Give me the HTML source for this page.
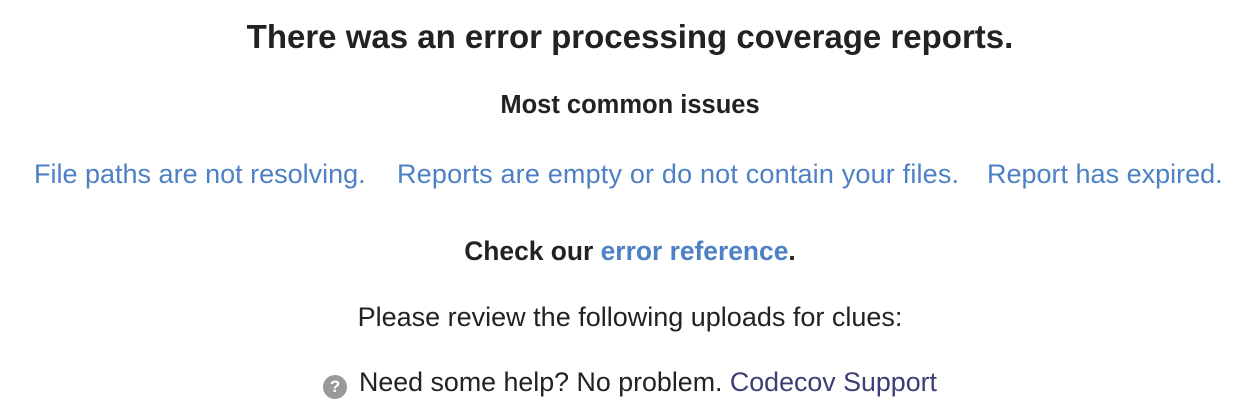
<!DOCTYPE html>
<html><head><meta charset="utf-8"><style>
body{margin:0;width:1260px;height:420px;background:#fff;font-family:"Liberation Sans",sans-serif;color:#222;position:relative;overflow:hidden}
.c{position:absolute;left:0;width:1260px;text-align:center;white-space:nowrap}
a{color:#4d80c4;text-decoration:none}
.l{position:absolute;top:159px;font-size:27px;color:#4d80c4;white-space:nowrap}
</style></head><body>
<div class="c" style="top:18px;font-size:33px;font-weight:bold">There was an error processing coverage reports.</div>
<div class="c" style="top:91px;font-size:25.5px;font-weight:bold">Most common issues</div>
<span class="l" style="left:34px">File paths are not resolving.</span>
<span class="l" style="left:397px;letter-spacing:0.18px">Reports are empty or do not contain your files.</span>
<span class="l" style="left:987px">Report has expired.</span>
<div class="c" style="top:236px;font-size:26.4px;font-weight:bold">Check our <a href="#">error reference</a>.</div>
<div class="c" style="top:302px;font-size:27px">Please review the following uploads for clues:</div>
<div class="c" style="top:367px;font-size:26.8px"><span style="display:inline-block;width:24px;height:24px;border-radius:50%;background:#999;color:#fff;font-size:17px;font-weight:bold;line-height:24px;vertical-align:-1px;margin-right:12px">?</span>Need some help? No problem. <a href="#" style="color:#3c3f74">Codecov Support</a></div>
</body></html>
